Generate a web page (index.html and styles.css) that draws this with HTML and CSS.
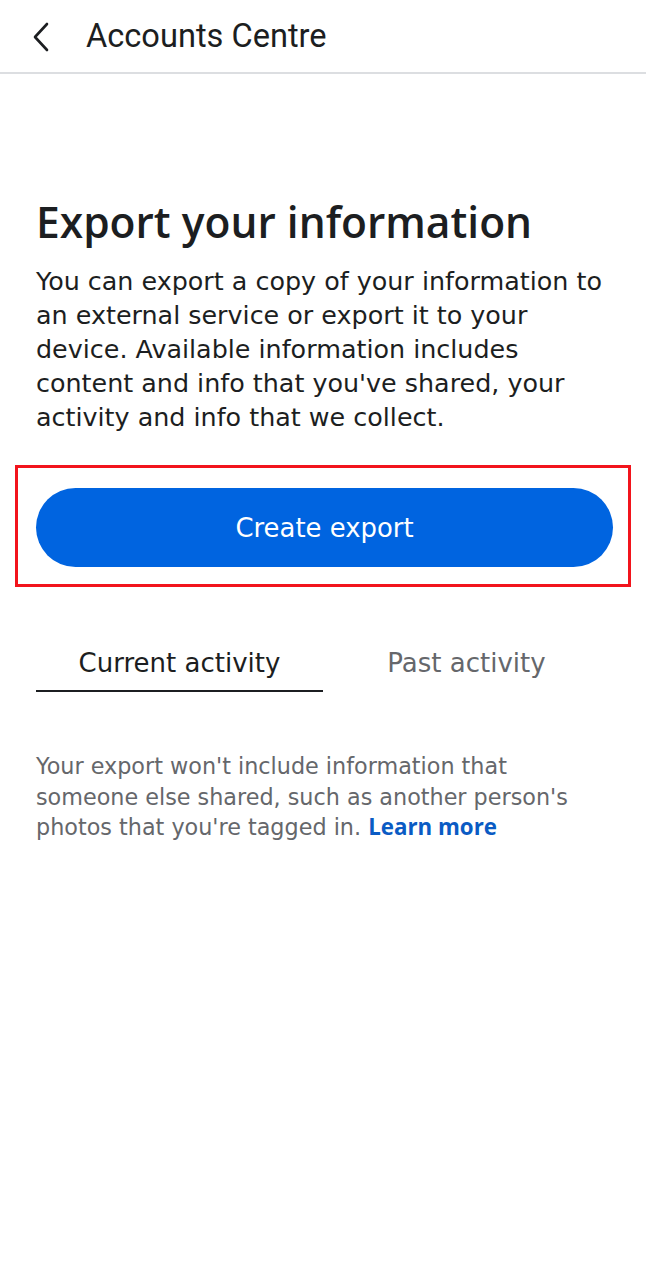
FILE: index.html
```html
<!DOCTYPE html>
<html lang="en">
<head>
<meta charset="utf-8">
<title>Accounts Centre</title>
<link rel="stylesheet" href="styles.css">
</head>
<body>
<header class="topbar">
  <svg class="back" viewBox="0 0 20 32" width="20" height="32" aria-hidden="true">
    <path d="M16 3 L4 16 L16 29" fill="none" stroke="#1c1e21" stroke-width="2.6" stroke-linecap="round" stroke-linejoin="round"/>
  </svg>
  <span class="topbar-title">Accounts Centre</span>
</header>
<main class="content">
  <h1 class="heading">Export your information</h1>
  <p class="intro">You can export a copy of your information to<br>an external service or export it to your<br>device. Available information includes<br>content and info that you've shared, your<br>activity and info that we collect.</p>
  <div class="highlight">
    <button class="primary">Create export</button>
  </div>
  <nav class="tabs">
    <div class="tab active">Current activity</div>
    <div class="tab">Past activity</div>
  </nav>
  <p class="note">Your export won't include information that<br>someone else shared, such as another person's<br>photos that you're tagged in. <a class="link" href="#">Learn more</a></p>
</main>
</body>
</html>
```
FILE: styles.css
```css
* { box-sizing: border-box; }
html, body { margin: 0; padding: 0; background: #fff; }
body {
  font-family: "DejaVu Sans", "Open Sans", sans-serif;
  color: #1c1e21;
  width: 646px;
}
.topbar {
  height: 74px;
  border-bottom: 2px solid #dcdee1;
  display: flex;
  align-items: center;
  padding-left: 31px;
  gap: 35px;
}
.back { display: block; margin-top: 2px; }
.topbar-title {
  font-family: Roboto, sans-serif;
  font-size: 32.6px;
  font-weight: 400;
  color: #1c1e21;
}
.content {
  padding: 124px 36px 0 36px;
}
.heading {
  margin: 0;
  font-family: "Open Sans", sans-serif;
  font-size: 42.5px;
  font-weight: 600;
  line-height: 48px;
  color: #1c1e21;
}
.intro {
  margin: 18px 0 0 0;
  font-size: 25.4px;
  line-height: 34px;
  white-space: nowrap;
  color: #1c1e21;
}
.highlight {
  margin: 31px -21px 0 -21px;
  border: 3px solid #f2141c;
  padding: 20px 15px 17px 18px;
}
.primary {
  display: block;
  width: 100%;
  height: 79px;
  border: none;
  border-radius: 40px;
  background: #0064e0;
  color: #fff;
  font-family: inherit;
  font-size: 25.9px;
  font-weight: 400;
}
.tabs {
  margin-top: 52px;
  display: grid;
  grid-template-columns: 287px 287px;
}
.tab {
  text-align: center;
  font-size: 26px;
  line-height: 30px;
  padding: 9px 0 12px 0;
  color: #65676b;
}
.tab.active {
  color: #1c1e21;
  border-bottom: 2px solid #1c1e21;
}
.note {
  margin: 59px 0 0 0;
  font-size: 22.3px;
  line-height: 30.5px;
  white-space: nowrap;
  color: #65676b;
}
.link {
  font-family: "Open Sans", sans-serif;
  color: #0a5bc4;
  font-weight: 700;
  text-decoration: none;
}
```
